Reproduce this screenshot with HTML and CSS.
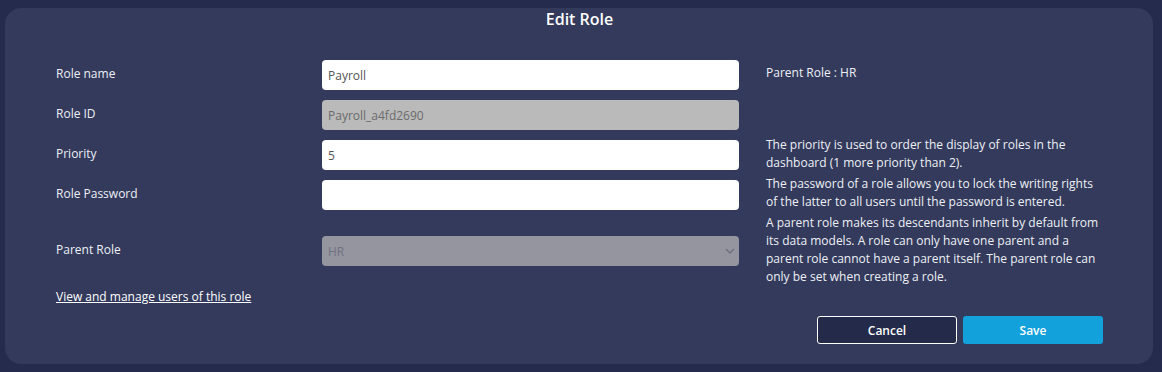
FILE: index.html
```html
<!DOCTYPE html>
<html>
<head>
	<title>Edit Role</title>
	<link rel="stylesheet" href="styles.css">
</head>
<body>
	<div class="modal">
		<h2 class="modal-title">Edit Role</h2>
		<div class="modal-body">
			<div class="role-form">
				<label for="role-name">Role name</label>
				<input type="text" id="role-name" value="Payroll">

				<label for="role-id">Role ID</label>
				<input type="text" id="role-id" value="Payroll_a4fd2690" disabled>

				<label for="priority">Priority</label>
				<input type="text" id="priority" value="5">

				<label for="password">Role Password</label>
				<input type="password" id="password">

				<label for="parent" class="parent-label">Parent Role</label>
				<div class="select-wrap parent-label">
					<select id="parent" disabled>
						<option>HR</option>
					</select>
					<svg class="chevron" width="10" height="6" viewBox="0 0 10 6"><path d="M1 1l4 4 4-4" fill="none" stroke="#6f7180" stroke-width="1.5"/></svg>
				</div>

				<a href="#" class="users-link">View and manage users of this role</a>
			</div>
			<div class="notes">
				<p class="parent-info">Parent Role : HR</p>
				<p class="first-note">The priority is used to order the display of roles in the dashboard (1 more priority than 2).</p>
				<p>The password of a role allows you to lock the writing rights of the latter to all users until the password is entered.</p>
				<p>A parent role makes its descendants inherit by default from its data models. A role can only have one parent and a parent role cannot have a parent itself. The parent role can only be set when creating a role.</p>
			</div>
		</div>
		<div class="actions">
			<button class="btn-cancel">Cancel</button>
			<button class="btn-save">Save</button>
		</div>
	</div>
</body>
</html>
```

FILE: styles.css
```css
body {
  margin: 0;
  padding: 8px 9px 8px 5px;
  background-color: #242b4c;
  font-family: "Open Sans", Arial, sans-serif;
  font-size: 12px;
  color: #eef0f5;
}

.modal {
  background-color: #333a5c;
  border-radius: 16px;
  padding: 0 50px 20px 51px;
}

.modal-title {
  margin: 0;
  text-align: center;
  font-size: 16px;
  line-height: 22px;
  font-weight: 600;
  color: #fff;
}

.modal-body {
  display: flex;
  gap: 27px;
  margin-top: 30px;
}

.role-form {
  display: grid;
  grid-template-columns: 266px 417px;
  row-gap: 10px;
  align-items: center;
  align-content: start;
}

.role-form label {
  line-height: 18px;
  padding-bottom: 3px;
}

.role-form input, .role-form select {
  box-sizing: border-box;
  width: 100%;
  height: 30px;
  border: none;
  border-radius: 4px;
  padding: 0 6px;
  font-family: inherit;
  font-size: 12px;
  color: #555;
  background-color: #fff;
  opacity: 1;
}

.role-form input:disabled {
  background-color: #bababa;
  color: #6b6b6b;
}

.parent-label {
  margin-top: 16px;
}

.select-wrap {
  position: relative;
  height: 30px;
}

.role-form select {
  display: block;
  appearance: none;
  background-color: #94959f;
  color: #70727f;
}

.chevron {
  position: absolute;
  right: 4px;
  top: 12px;
}

.users-link {
  grid-column: 1 / 3;
  justify-self: start;
  margin-top: 12px;
  color: #fff;
  line-height: 18px;
}

.notes {
  width: 340px;
  padding-top: 4px;
}

.notes p {
  margin: 0 0 3px 0;
  line-height: 18px;
}

.notes .first-note {
  margin-top: 54px;
}

.actions {
  display: flex;
  justify-content: flex-end;
  gap: 6px;
  margin-top: 10px;
}

.actions button {
  width: 140px;
  height: 28px;
  border-radius: 3px;
  font-family: inherit;
  font-size: 12px;
  font-weight: 600;
  color: #fff;
  cursor: pointer;
}

.btn-cancel {
  background-color: #232a4a;
  border: 1px solid #fff;
}

.btn-save {
  background-color: #13a1dc;
  border: none;
}
```
